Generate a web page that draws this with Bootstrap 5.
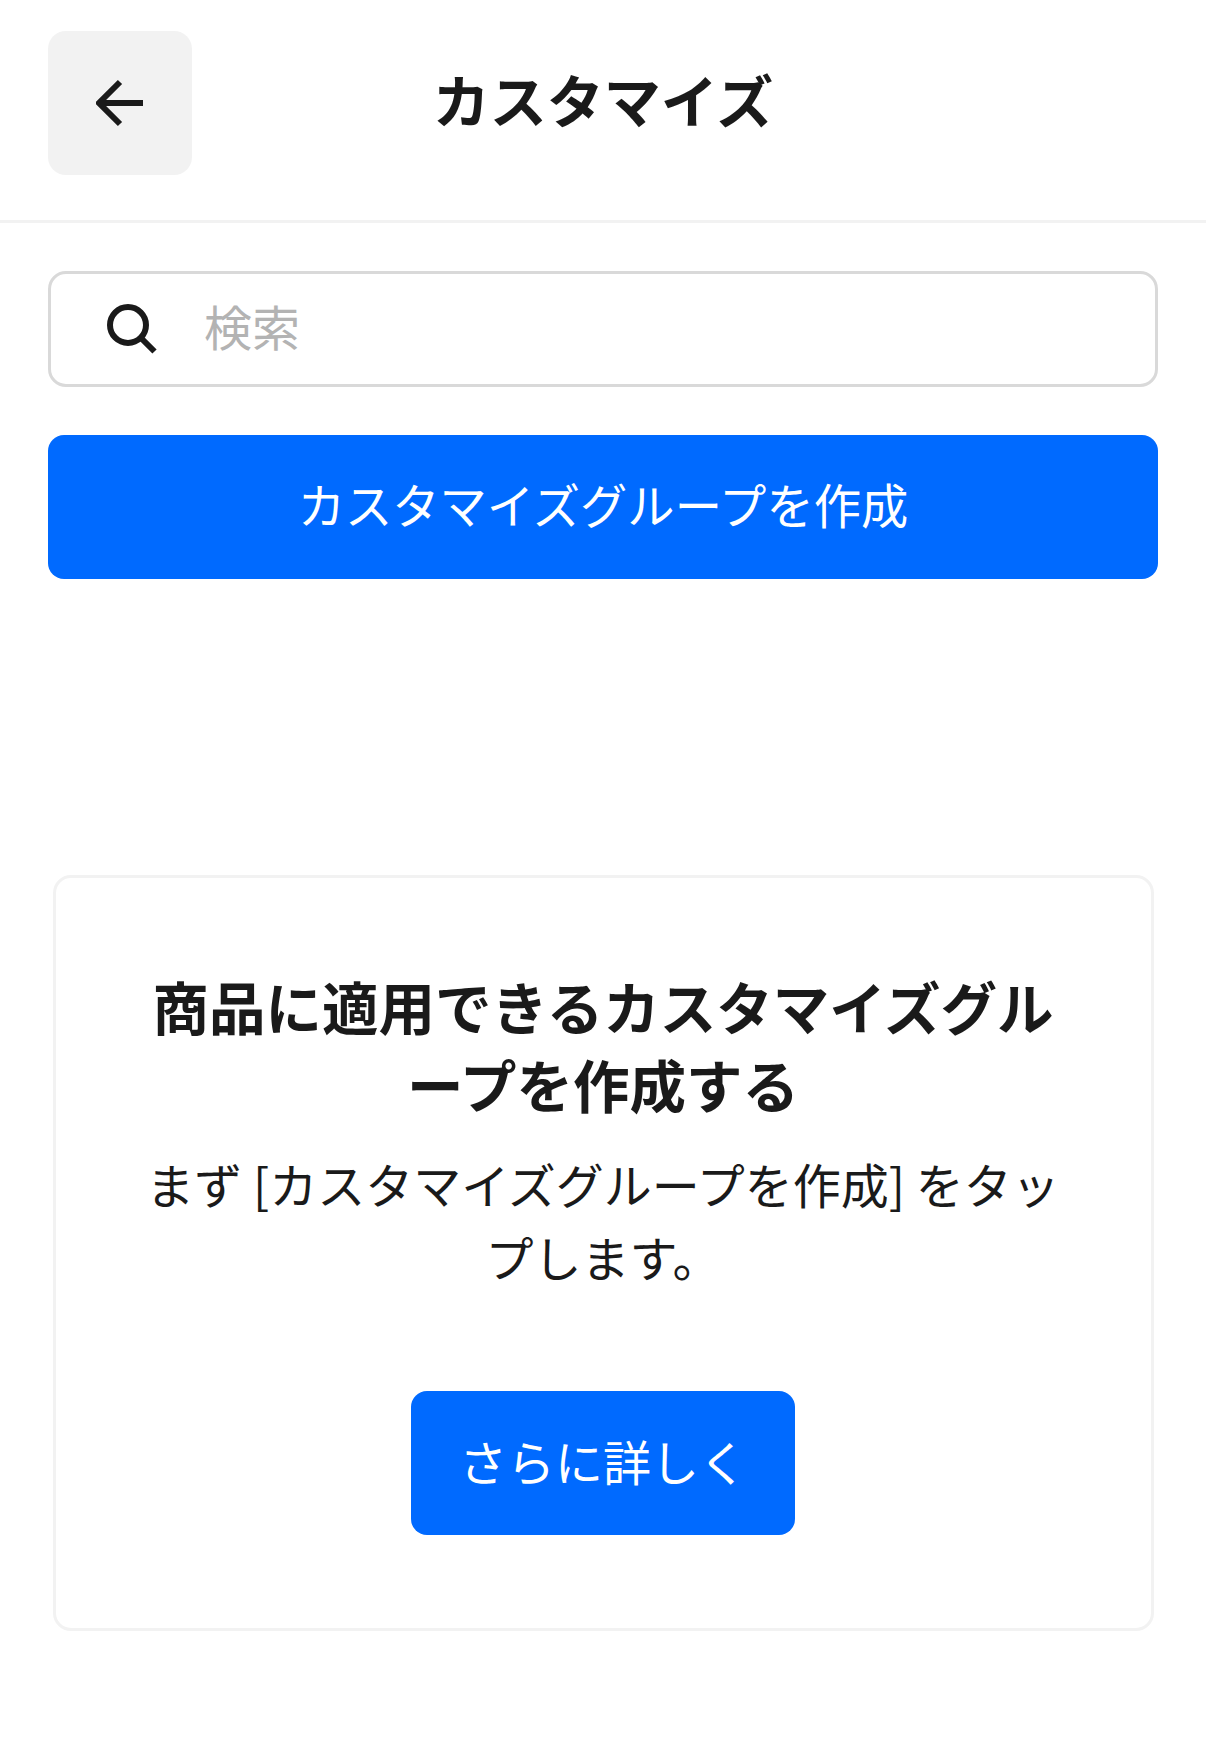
<!DOCTYPE html>
<html lang="ja">
<head>
<meta charset="utf-8">
<title>カスタマイズ</title>
<link rel="stylesheet" href="https://cdn.jsdelivr.net/npm/bootstrap@5.3.0/dist/css/bootstrap.min.css">
<style>
html,body{background:#fff;}
body{font-family:"Noto Sans CJK JP","Liberation Sans",sans-serif;color:#1a1a1a;min-height:1764px;}
.top-head{height:223px;border-bottom:3px solid #f2f2f2;padding:0 48px 0 48px;}
.back-btn{width:144px;height:144px;background:#f2f2f2;border:0;border-radius:18px;margin-top:31px;padding:0;}
.head-title{font-size:57px;font-weight:700;line-height:72px;margin-top:62px;margin-left:-144px;letter-spacing:0;}
.main-area{padding:48px 48px 0;}
.search-box{height:116px;border:3px solid #d9d9d9;border-radius:18px;padding-left:56px;gap:47px;}
.search-input{border:0;outline:0;background:transparent;font-size:48px;color:#1a1a1a;width:100%;padding:0 0 9px;height:100%;}
.search-input::placeholder{color:#b3b3b3;opacity:1;}
.blue-btn{background:#006aff;color:#fff;border:0;border-radius:16px;height:144px;font-size:48px;line-height:60px;padding:0 0 7px;}
.blue-btn:hover,.blue-btn:active{background:#006aff;color:#fff;}
.create-btn{width:100%;margin-top:48px;font-size:47.300px;}
.empty-card{margin:296px 4px 0 5px;height:756px;border:3px solid #f2f2f2;border-radius:18px;padding:88px 85px 0 84px;text-align:center;background:#fff;}
.empty-title{font-size:56.500px;font-weight:700;line-height:78px;margin:0;color:#1a1a1a;}
.empty-text{font-size:48px;font-weight:400;line-height:72.500px;margin:25px 0 0;}
.more-btn{width:384px;margin-top:99px;}
</style>
</head>
<body>
<header class="top-head d-flex align-items-start">
  <button class="btn back-btn d-flex align-items-center justify-content-center flex-shrink-0" type="button" aria-label="戻る">
    <svg width="48" height="48" viewBox="0 0 48 48" fill="none" stroke="#1a1a1a" stroke-width="6"><path d="M47 24H4M24 3 3 24l21 21"/></svg>
  </button>
  <div class="head-title flex-grow-1 text-center">カスタマイズ</div>
</header>
<main class="main-area">
  <div class="search-box d-flex align-items-center">
    <svg class="flex-shrink-0" width="50" height="50" viewBox="0 0 50 50" fill="none" stroke="#1a1a1a" stroke-width="6"><circle cx="21" cy="21" r="18"/><path d="m33.500 33.500 14 14"/></svg>
    <input class="search-input" type="text" placeholder="検索">
  </div>
  <button class="btn blue-btn create-btn" type="button">カスタマイズグループを作成</button>
  <section class="empty-card">
    <h2 class="empty-title">商品に適用できるカスタマイズグループを作成する</h2>
    <p class="empty-text">まず [カスタマイズグループを作成] をタップします。</p>
    <button class="btn blue-btn more-btn" type="button">さらに詳しく</button>
  </section>
</main>
</body>
</html>
